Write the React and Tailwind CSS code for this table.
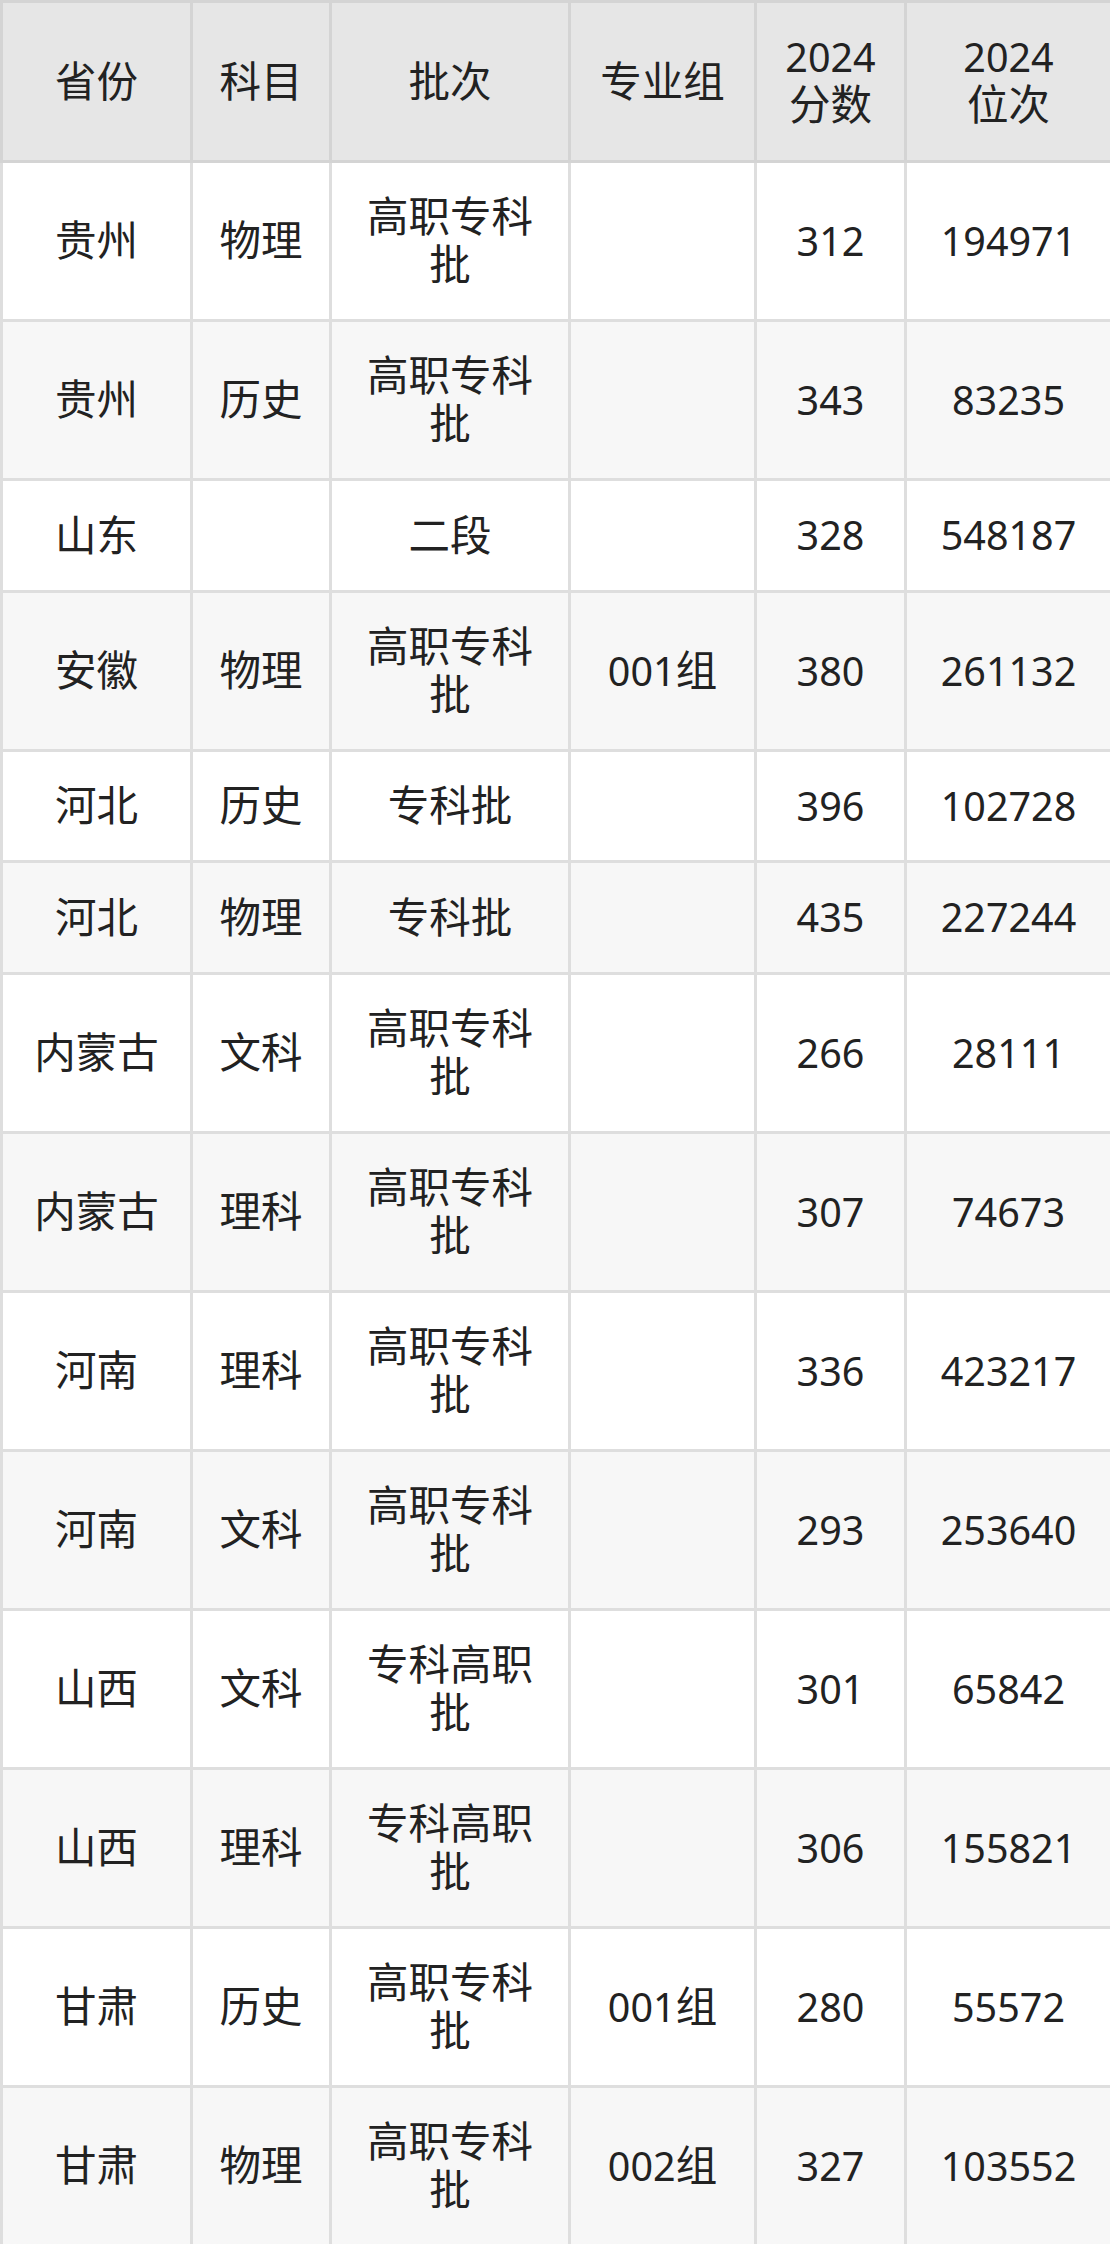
import React from "react";

const rows = [
  ["贵州", "物理", "高职专科批", "", "312", "194971"],
  ["贵州", "历史", "高职专科批", "", "343", "83235"],
  ["山东", "", "二段", "", "328", "548187"],
  ["安徽", "物理", "高职专科批", "001组", "380", "261132"],
  ["河北", "历史", "专科批", "", "396", "102728"],
  ["河北", "物理", "专科批", "", "435", "227244"],
  ["内蒙古", "文科", "高职专科批", "", "266", "28111"],
  ["内蒙古", "理科", "高职专科批", "", "307", "74673"],
  ["河南", "理科", "高职专科批", "", "336", "423217"],
  ["河南", "文科", "高职专科批", "", "293", "253640"],
  ["山西", "文科", "专科高职批", "", "301", "65842"],
  ["山西", "理科", "专科高职批", "", "306", "155821"],
  ["甘肃", "历史", "高职专科批", "001组", "280", "55572"],
  ["甘肃", "物理", "高职专科批", "002组", "327", "103552"],
];

const heights = [159, 159, 112, 159, 111, 112, 159, 159, 159, 159, 159, 159, 159, 159];

function Txt({ s }) {
  const parts = s.match(/[\u4e00-\u9fff]+|[^\u4e00-\u9fff]+/g) || [];
  return parts.map((p, i) =>
    /[\u4e00-\u9fff]/.test(p) ? (
      <span key={i} className="text-[41.5px]">
        {p}
      </span>
    ) : (
      <span key={i}>{p}</span>
    )
  );
}

export default function App() {
  return (
    <div
      className="w-[1110px] bg-white text-[#222222]"
      style={{ fontFamily: '"Noto Sans", "Noto Sans CJK SC", sans-serif' }}
    >
      <table className="w-[1110px] table-fixed border-collapse border-[3px] border-[#d9d9d9] text-[39.5px] leading-[47px]">
        <colgroup>
          <col className="w-[190px]" />
          <col className="w-[139px]" />
          <col className="w-[239px]" />
          <col className="w-[186px]" />
          <col className="w-[150px]" />
          <col className="w-[206px]" />
        </colgroup>
        <thead>
          <tr className="h-[160px] bg-[#e6e6e6]">
            {["省份", "科目", "批次", "专业组", "2024分数", "2024位次"].map((h, i) => (
              <th
                key={i}
                className="border-[3px] border-[#d4d4d4] px-[20px] text-center align-middle font-normal"
              >
                {h.startsWith("2024") ? (
                  <>
                    <span className="block">2024</span>
                    <span className="block">
                      <Txt s={h.slice(4)} />
                    </span>
                  </>
                ) : (
                  <Txt s={h} />
                )}
              </th>
            ))}
          </tr>
        </thead>
        <tbody>
          {rows.map((r, ri) => (
            <tr
              key={ri}
              className={ri % 2 === 1 ? "bg-[#f7f7f7]" : "bg-white"}
              style={{ height: heights[ri] }}
            >
              {r.map((c, ci) => (
                <td
                  key={ci}
                  className="border-[3px] border-[#dedede] px-[20px] text-center align-middle break-all"
                >
                  <Txt s={c} />
                </td>
              ))}
            </tr>
          ))}
        </tbody>
      </table>
    </div>
  );
}
